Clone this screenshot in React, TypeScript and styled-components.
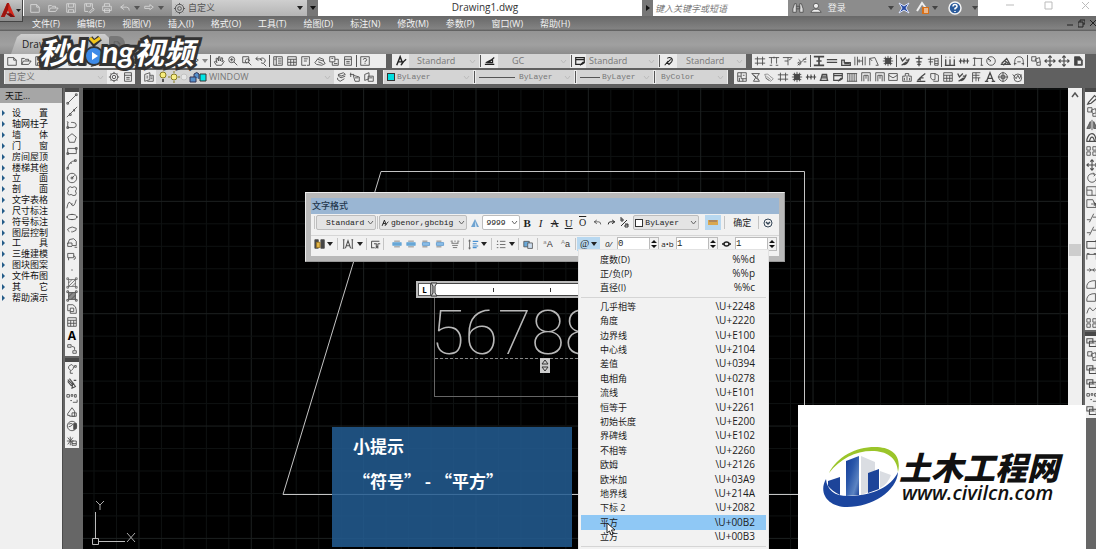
import React from "react";
import styled, { createGlobalStyle, css } from "styled-components";

const SANS = '"Open Sans", "Noto Sans CJK SC", sans-serif';
const MONO = '"Liberation Mono", "Noto Sans CJK SC", monospace';

const GlobalStyle = createGlobalStyle`
  * { box-sizing: border-box; }
  body { margin: 0; overflow: hidden; background: #6a6a6a; font-family: ${SANS}; }
  button, select, input { font: inherit; color: inherit; border: 0; padding: 0; margin: 0; background: none; outline: none; border-radius: 0; }
  button { display: flex; align-items: center; justify-content: center; }
  ul { list-style: none; margin: 0; padding: 0; }
  svg { display: block; flex: none; }
`;

/* ---------- icons, all on a 14 x 14 field ---------- */

const icons: Record<string, React.ReactNode> = {
  new: <path d="M2 3H9L12 6V12H2ZM9 3V6H12" />,
  open: <path d="M2 11V4H5L6 5H10V7M2 11L4 7H13L10 11Z" />,
  save: <path d="M2 2H12V12H2ZM4 2V6H10V2M4 12V9H10V12" />,
  saveAs: <path d="M2 2H11V7M2 2V11H6M4 2V5H9V2M7 12L12 7L13 9L8 13Z" />,
  print: <path d="M4 5V2H10V5M2 5H12V10H2ZM4 8H10V12H4Z" />,
  undo: <path d="M6 3L2 6L6 9M2 6H9Q12 6 12 10" />,
  redo: <path d="M8 3L12 6L8 9V7.500H2V5H8Z" />,
  gear: (
    <>
      <circle cx="7" cy="7" r="4.500" />
      <circle cx="7" cy="7" r="2" />
      <path d="M7 1V3M7 11V13M1 7H3M11 7H13M3 3L4 4M10 10L11 11M11 3L10 4M3 11L4 10" />
    </>
  ),
  hand: <path d="M4 12L1.500 8L3 7L4.500 9L3.500 4L5 3.500L6.500 7V2L8 2L8.500 7L10 3L11.300 3.500L10.500 8L12 6.500L13 7.500L10 12Z" />,
  zoom: (
    <>
      <circle cx="5.500" cy="5.500" r="3.500" />
      <path d="M8 8L12 12M5.500 3.500V7.500M3.500 5.500H7.500" />
    </>
  ),
  zoomWin: <path d="M2 2H9V9H2ZM8 8L12 12M7 9.500A2.500 2.500 0 1 1 10 7" />,
  zoomPrev: <path d="M3 2L1 4.500L4 6.500M1 4.500H7L8 7M6 6A3 3 0 1 1 7 9M10 10L13 13" />,
  props: <path d="M2 2H12V12H2ZM5 2V12M7 4.500H11M7 7H11M7 9.500H11M3.500 4V6" />,
  grid: <path d="M2 2H12V12H2ZM2 5H12M5.500 5V12M9 5V12M2 8.500H12" />,
  palette: <path d="M2 2H11V8M2 2V12H7M4.500 4.500H9M4.500 7H8M11 8V12H8" />,
  sheet: <path d="M1 9L4 5L11 7L13 10L9 12L3 11ZM4 5L6 3L11 5V7M5 8L10 10" />,
  markup: <path d="M2 2H8V8H2ZM8 5H12V12H5V8M7 10H11M4 4H6" />,
  calc: <path d="M3 2H11V12H3ZM3 5H11M5 7.500H9M5 9.500H9" />,
  help: (
    <>
      <path d="M2 2H12V12H2Z" />
      <path d="M5 5.500Q5 4 7 4Q9 4 9 5.500Q9 7 7 7.500V8.500M7 9.500V10.500" />
    </>
  ),
  styleA: <path d="M2 12L6 2L9 10M3.500 8H8M7 12Q9 8 13 5" strokeWidth="1.700" />,
  dim: <path d="M1 11H12M2 9L8 6L12 3M5 9L10 5V9Z" strokeWidth="1.400" />,
  table: <path d="M2 3H12V9L9 11H2ZM2 5.500H12M7 12L11 8" strokeWidth="1.400" />,
  leader: <path d="M2 12L6 7M5 4A3 3 0 1 1 10 8L7 11L5 9L9 5" strokeWidth="1.200" />,
  layers: <path d="M2 4L8 2V10L2 12ZM4 6H6M4 8H6M8 5H12V12H5M9 7H11M9 9H11" />,
  layerStack: <path d="M4 4L10 2L12 4L7 6ZM4 4V6L7 8L12 6M3 8V10L6 12L11 9" />,
  layerPrev: <path d="M2 2V7M1 4H6M5 5L12 7V12H7ZM7 8H11" />,
  layerState: <path d="M2 4L7 2V9L2 11ZM6 6H12V12H6ZM8 8H11" />,
  hash: <path d="M4 2V12M10 2V12M1 4.500H13M1 9.500H13" />,
  axis: <path d="M1 3H13M4 3V10M10 3V10M2 12H5M9 12H12M7 2V4" />,
  tee: <path d="M1 3H12M7 3V12M3 7H7M8 6L11 4" />,
  scissor: <path d="M2 12L12 3M3 5L6 8M8 5H12M9 8H12M2 9Q4 7 6 10Q4 13 2 10" />,
  ibeam: <path d="M1 2H13M1 12H13M7 2V12M4 7H10" strokeWidth="2" />,
  wall: <path d="M1 5.500H13M1 8.500H13" strokeWidth="1.500" />,
  stair: <path d="M2 12V6H5V9H12V12ZM5 10H11" strokeWidth="1.500" />,
  window: <path d="M1 2V12M13 2V12M4 2V12M10 2V12M4 7H10M6 5V9" />,
  door: <path d="M2 12V4M2 4L8 3L12 12H9M2 4L5 7" />,
  column: (
    <>
      <path d="M4 4H10V10H4Z" fill="currentColor" />
      <path d="M7 1V13M1 7H13M2 4H12M2 10H12M4 2V12M10 2V12" />
    </>
  ),
  textTool: <path d="M2 3L4 7L8 3M5 11Q9 12 12 4M3 12L9 8M8 6H12" strokeWidth="1.500" />,
  plusText: <path d="M7 1V13M3 4H11M4 8H10M5 11H9" strokeWidth="1.500" />,
  plusGrid: <path d="M4 2V12M1 5H8M2 8H7M9 4H13V12H9ZM9 7H13M9 10H13" />,
  dims: <path d="M1 12H13M2 5V12M7 5V12M12 5V12M2 2V3M7 2V3M12 2V3" strokeWidth="1.500" />,
  dimRow: <path d="M1 7H13M3 4V10M7 4V10M11 4V10M2 8L4 6M6 8L8 6" strokeWidth="1.300" />,
  dimEnds: <path d="M2 4H12M3 4V12M11 4V12M1 4L4 3M10 12H13M1 12H4" />,
  circle: (
    <>
      <circle cx="7" cy="7" r="5" />
      <path d="M7 7L4 4M7 7H5M4 4V6" />
    </>
  ),
  angle: <path d="M2 11H13L9 4L3 10M7 7L11 10M5 12L8 9" strokeWidth="1.500" />,
  arc: <path d="M2 12V8Q2 2 7 2Q12 2 12 8V12M1 10H4M10 10H13M5 8H9" />,
  copy: <path d="M2 2H7V7H2ZM6 5L11 3L12 8L8 9ZM8 9V12H12V8" />,
  move: <path d="M7 1V13M1 7H13M5 3L7 1L9 3M5 11L7 13L9 11M3 5L1 7L3 9M11 5L13 7L11 9" strokeWidth="1.300" />,
  paste: (
    <>
      <path d="M3 2H9L12 6V12H3Z" fill="#444" />
      <path d="M6 6H11V11H6Z" fill="#eee" />
    </>
  ),
  room: <path d="M2 2H12V12H2ZM2 6H6M6 2V9H12M8 12V9M4 8V12M8 5H10" />,
  leaf: <path d="M2 3H11L8 7L11 12H4L7 7ZM4 5L9 10" />,
  ball: <path d="M2 4Q6 2 8 6L12 9L9 12L4 9ZM4 6L9 10M3 8L7 11" opacity=".6" />,
  bench: <path d="M2 11H12M3 11L5 4H10L11 11M4 8H10M5 6H10" strokeWidth="1.500" />,
  bars: <path d="M2 3V12M4.500 3V12M7 3V12M9.500 3V12M12 3V12M1 3H13M1 12H13" />,
  gate: <path d="M2 12V2H12V12M4.500 12V5H9.500V12M7 5V9" />,
  frame: <path d="M2 3H12V11H2ZM2 5L7 8L12 5" />,
  tower: <path d="M2 12V6H5V3H9V6H12V12ZM4 8V11M7 5V11M10 8V11" />,
  steps: <path d="M2 12H12M3 11L8 6L12 3M6 11V8H10" strokeWidth="1.500" />,
  pages: <path d="M2 3H7V10Q4 12 2 8ZM7 3L11 5V12H5" />,
  flag: <path d="M3 13V2H12M3 5H11M3 8H12M7 2V12M10 8V12" />,
  bigA: <path d="M3 12L7 2L11 12M4.500 8.500H9.500M1 12H5M9 12H13" strokeWidth="1.500" />,
  target: (
    <>
      <circle cx="7" cy="7" r="5" />
      <path d="M7 1V13M1 7H13M5 5H9V9H5Z" />
    </>
  ),
  ring: (
    <>
      <circle cx="8" cy="8" r="4.500" />
      <path d="M2 4L6 9L8 5L10 9L12 4" />
    </>
  ),
  line: <path d="M2 12L12 2M1 11H3V13H1ZM11 1H13V3H11Z" />,
  xline: <path d="M1 13L13 1M4 9H6V11H4ZM9 4H10V6H9Z" />,
  pline: <path d="M2 4V10M2 10H9Q12 10 12 7Q12 4 8 4H6M1 9H3V11H1ZM1 3L3 4" />,
  polygon: <path d="M7 2L12 6L10 12H4L2 6Z" />,
  rect: <path d="M2 4H12V10H2ZM1 9H3V11H1ZM11 3H13V5H11Z" />,
  arcDraw: <path d="M2 12Q3 4 11 3M1 11H3V13H1ZM5 6H7M10 2H12V4H10Z" />,
  circleDraw: (
    <>
      <circle cx="7" cy="7" r="5.500" />
      <path d="M7 7L10 4M6 6H8V8H6Z" />
    </>
  ),
  cloud: <path d="M3 3Q5 1 7 3Q10 1 12 3Q13 5 11 7Q13 10 11 12Q8 13 6 11Q2 13 2 9Q4 7 2 5Z" />,
  spline: <path d="M1 12Q3 1 6 7Q9 13 12 2M6 7H8" />,
  ellipse: (
    <>
      <ellipse cx="7" cy="7" rx="5.500" ry="3" />
      <path d="M6 4H8M6 10H8M1 6V8M13 6V8" />
    </>
  ),
  ellArc: <path d="M4 9Q0 7 3 5Q7 2 12 5Q13 8 8 9M7 8V10" />,
  block: <path d="M2 8L4 3L9 2L12 5V10H7V7H2V11H7M10 12H13" />,
  insert: <path d="M2 4H9V9H2ZM9 7A2 2 0 1 1 9 11M3 9V12" />,
  point: <path d="M6.500 7H7.500" strokeWidth="1.500" />,
  hatch: <path d="M3 3H11V11H3ZM3 7L7 3M3 11L11 3M7 11L11 7M1 1H3V3H1ZM11 1H13V3H11ZM1 11H3V13H1ZM11 11H13V13H11Z" strokeWidth=".8" />,
  gradient: (
    <>
      <path d="M3 3H11V11H3Z" fill="#8a8a8a" />
      <path d="M1 1H3V3H1ZM11 1H13V3H11ZM1 11H3V13H1ZM11 11H13V13H11ZM3 8L8 3M6 11L11 6" />
    </>
  ),
  region: <path d="M2 2H8Q12 4 12 8V12H5V9H2ZM5 9V6H9V10H5" />,
  nodes: <path d="M2 2H6V5H2ZM7 4L10 5V8M8 9H12V12H8Z" />,
  bulb: <path d="M4 3Q7 0 9 4Q9 7 6 9Q1 6 4 3M5 9V12H8M10 3H12V5H10Z" />,
  brush: <path d="M2 3L8 9M4 2L9 8L6 10L2 5M9 4H12M8 7L11 11L7 13Z" strokeWidth="1.300" />,
  dots: <path d="M1 3H4V6H1ZM6 3H8V5H6ZM10 3H12V6H10ZM5 10H7M8 12H13V9" />,
  home: <path d="M2 9L7 2L10 6V12H4M2 9V11H5M7 8H12V12H7Z" />,
  globe: (
    <>
      <circle cx="7" cy="7" r="5.500" />
      <path d="M3 5Q6 3 8 5L6 7L3 8" />
      <path d="M9 4H12V10L9 11Z" fill="currentColor" />
    </>
  ),
  sun: <path d="M5 2V12M1 7H9M2 3L8 10M8 3L2 11M7 7H12V12H7ZM7 10H12" />,
  pencil: <path d="M3 11L10 3L13 6L6 12L2 13Z" strokeWidth="1.400" />,
  mirror: <path d="M7 1V13M5 3V11H1ZM9 3V11H13Z" fill="#777" />,
  offset: <path d="M1 11V9Q3 2 7 2Q11 2 12 11ZM4 11Q5 6 7 6Q9 6 10 11" strokeWidth="1.400" />,
  array: <path d="M1 2H5V6H1ZM8 2H12V6H8ZM1 8H5V12H1ZM8 8H12V12H8Z" />,
  rotate: <path d="M10 3A5 5 0 1 0 12 7M8 1L11 3L9 5" />,
  scale: <path d="M1 2H12V12H1ZM1 6H7V12" />,
  stretch: <path d="M1 2H8L12 11H1ZM6 7H12M9 5L12 7L9 9" />,
  trim: <path d="M1 9H5M8 6H12M4 12L9 2" />,
  breakIt: <path d="M1 10V4H12V10M1 3H4M9 3H12" />,
  boxOpen: <path d="M1 12V4H12V12H1M11 3H13" strokeWidth="1.200" />,
  join: <path d="M1 7H13M4 5L6 7L4 9M10 5L8 7L10 9" />,
  fillet: <path d="M1 12V9Q2 3 11 3V12Z" />,
  wave: <path d="M1 11Q4 1 6 6Q8 10 12 4" />,
  front: <path d="M1 2H8V7H1ZM4 5H12V11H4ZM4 7H10" strokeWidth="1.200" />,
  align: (
    <>
      <path d="M3 3H11M3 11H11" stroke="#666" />
      <path d="M1 5H13V9H1Z" fill="#68a8d8" stroke="#68a8d8" />
    </>
  ),
  alignBlue: (
    <>
      <path d="M2 3H9M2 11H9" stroke="#555" />
      <path d="M2 5H12V9H2Z" fill="#8cbfe8" stroke="#5090c8" />
    </>
  ),
  distribute: <path d="M1 3H4M6 3H8M10 3H13M2 6H12M3 9H11M4 12H10M2 4L4 6M12 4L10 6" />,
  columns: (
    <>
      <path d="M1 2H5V12H1ZM8 2H12V12H8Z" fill="#444" />
      <path d="M3 5H7V11H3Z" fill="#e5b84a" stroke="#a07820" />
    </>
  ),
  boxA: <path d="M2 2V12M12 2V12M4 12L7 3L10 12M5 9H9M1 2H3M11 2H13M1 12H3M11 12H13" strokeWidth="1.200" />,
  para: <path d="M2 3H12M2 3V11H6M5 6H8V11M10 6V12M10 6H13M10 9L7 12" strokeWidth="1.300" />,
  spacing: (
    <>
      <path d="M2 2V12M1 3L2 1L3 3M1 11L2 13L3 11" />
      <path d="M6 3H13M6 6H11M6 9H13M6 11H11" stroke="#4a90d0" strokeWidth="1.400" />
    </>
  ),
  list: <path d="M5 3H12M5 7H12M5 11H12M2 2V4M1 7H3M1 11H3" />,
  field: (
    <>
      <path d="M1 3H8V10H1Z" fill="#68a8d8" />
      <path d="M6 5H12V12H6Z" fill="#cde" />
    </>
  ),
  binoc: (
    <>
      <path d="M3 2H5V12H1V8ZM9 2H11L13 8V12H9Z" fill="#ddd" />
      <path d="M5 5H9V8H5" />
    </>
  ),
  user: (
    <>
      <circle cx="7" cy="4.500" r="3" fill="#eee" />
      <path d="M1 12Q2 9 5 8.500H9Q12 9 13 12Z" fill="#eee" />
    </>
  ),
};

type IconProps = { name: string; size?: number; color?: string };
const Icon = ({ name, size = 12, color = "#505050" }: IconProps) => (
  <svg width={size} height={size} viewBox="0 0 14 14" fill="none" stroke={color} color={color} strokeWidth="1">
    {icons[name]}
  </svg>
);

const Caret = ({ color = "#222" }: { color?: string }) => (
  <svg width="6" height="4" viewBox="0 0 6 4"><path d="M0 0H6L3 4Z" fill={color} /></svg>
);
const Chevron = ({ color = "#999" }: { color?: string }) => (
  <svg width="7" height="5" viewBox="0 0 7 5" fill="none" stroke={color}><path d="M1 1L3.500 4L6 1" /></svg>
);

/* ---------- shared parts ---------- */

const IconButton = styled.button<{ $w?: number; $active?: boolean }>`
  width: ${(p) => p.$w ?? 14}px;
  height: 100%;
  flex: 0 1 auto;
  min-width: 0;
  gap: 2px;
  font-size: 12px;
  line-height: 14px;
  background: ${(p) => (p.$active ? "#b8d8f0" : "none")};
`;

const Spacer = styled.span<{ $w: number }>`
  flex: none;
  width: ${(p) => p.$w}px;
`;

const Separator = styled.span<{ $light?: boolean }>`
  flex: none;
  width: 1px;
  margin: 1px;
  align-self: stretch;
  background: ${(p) => (p.$light ? "#c4c4c4" : "#555")};
`;

const Field = styled.label<{ $w: number; $boxed?: boolean; $bg?: string }>`
  display: flex;
  align-items: center;
  gap: 2px;
  flex: none;
  width: ${(p) => p.$w}px;
  height: 100%;
  padding: 0 3px;
  background: ${(p) => p.$bg ?? "#d4d4d4"};
  ${(p) => p.$boxed && css`border: 1px solid #bdbdbd; border-radius: 2px; padding: 0 1px; gap: 1px;`}
`;

const Select = styled.select<{ $mono?: boolean; $size?: number; $color?: string; $indent?: number }>`
  appearance: none;
  flex: 1;
  min-width: 0;
  font-family: ${(p) => (p.$mono ? MONO : SANS)};
  font-size: ${(p) => p.$size ?? 9}px;
  line-height: 12px;
  color: ${(p) => p.$color ?? "#777"};
  padding-left: ${(p) => p.$indent ?? 0}px;
`;

const Swatch = styled.span<{ $fill: string }>`
  flex: none;
  width: 8px;
  height: 8px;
  border: 1px solid #333;
  background: ${(p) => p.$fill};
`;

const LineSample = styled.span<{ $w: number }>`
  flex: none;
  width: ${(p) => p.$w}px;
  height: 1px;
  background: #555;
`;

const IconGroup = ({ names }: { names: string[] }) => (
  <>
    {names.map((n, i) =>
      n === "|" ? <Separator key={i} /> : (
        <IconButton key={i} aria-label={n}><Icon name={n} color="#484848" /></IconButton>
      )
    )}
  </>
);

/* ---------- header ---------- */

const Page = styled.div`
  position: relative;
  display: flex;
  flex-direction: column;
  min-height: 100vh;
  overflow: hidden;
  background: #6a6a6a;
`;

const TitleBar = styled.header`
  display: flex;
  height: 16px;
  padding-left: 24px;
  background: #fff;
`;

const QuickBar = styled.div`
  display: flex;
  align-items: center;
  width: 148px;
  padding-left: 2px;
  background: linear-gradient(#a8a8a8, #8a8a8a);
`;

const Workspace = styled.label`
  display: flex;
  align-items: center;
  gap: 2px;
  width: 135px;
  padding: 0 4px 0 1px;
  background: linear-gradient(#cfcfcf, #b4b4b4);
`;

const SquareButton = styled.button`
  width: 11px;
  background: #777;
`;

const WindowTitle = styled.h1`
  flex: 1;
  margin: 0;
  padding-left: 10px;
  text-align: center;
  font-size: 10px;
  line-height: 14px;
  font-weight: 400;
  color: #333;
`;

const SearchInput = styled.input`
  width: 135px;
  padding-left: 2px;
  font-size: 9px;
  font-style: italic;
  background: #fff;
  &::placeholder { color: #777; opacity: 1; }
`;

const Account = styled.div`
  display: flex;
  align-items: center;
  width: 190px;
  padding-left: 1px;
  background: #8c8c8c;
  color: #eee;
  font-size: 9px;
`;

const SignIn = styled.button`
  width: 64px;
  padding: 0 0 2px 3px;
  justify-content: flex-start;
`;

const WindowButtons = styled.div`
  display: flex;
  justify-content: space-between;
  width: 118px;
  padding: 0 6px 6px 28px;
`;

const AppButton = styled.button`
  position: absolute;
  z-index: 2;
  left: 0;
  top: 0;
  width: 23px;
  height: 22px;
  gap: 1px;
  border-right: 1px solid #444;
  border-bottom: 1px solid #444;
  background: linear-gradient(#c4c4c4, #8c8c8c);
`;

const MenuBar = styled.nav`
  display: flex;
  align-items: center;
  gap: 17px;
  height: 15px;
  padding-left: 32px;
  background: linear-gradient(#686868, #828282 85%, #5a5a5a);
  button { color: #f2f2f2; font-size: 9px; line-height: 13px; }
`;

const DocButtons = styled.div`
  display: flex;
  gap: 4px;
  margin-left: auto;
`;

const TabStrip = styled.div`
  display: flex;
  align-items: flex-end;
  height: 23px;
  padding-left: 11px;
  background: linear-gradient(#949494, #a0a0a0 60%, #8c8c8c);
`;

const FileTab = styled.button`
  width: 98px;
  height: 20px;
  justify-content: flex-start;
  padding-left: 11px;
  font-size: 10px;
  color: #222;
  background: linear-gradient(#cecece, #ababab);
  clip-path: polygon(0 100%, 6px 15%, 10px 0, 94px 0, 100% 20%, 100% 100%);
`;

const NewTab = styled.button`
  width: 16px;
  height: 16px;
  margin-bottom: 2px;
  border-radius: 2px 8px 8px 2px;
  background: #777;
`;

const Watermark = styled.div`
  position: absolute;
  z-index: 3;
  left: 39px;
  top: 33px;
  display: flex;
  align-items: center;
  font: italic 700 30px/36px "Noto Sans CJK SC", sans-serif;
  color: #fff;
  -webkit-text-stroke: 6px #333;
  paint-order: stroke fill;
`;

const Latin = styled.span`
  font: italic 700 31px/36px Lato, sans-serif;
`;

const ToolRows = styled.div`
  display: flex;
  flex-direction: column;
  gap: 2px;
  padding: 0 0 4px 4px;
  background: #606060;
`;

const ToolRow = styled.div`
  display: flex;
  gap: 6px;
  height: 14px;
`;

const Bar = styled.div<{ $w?: number }>`
  display: flex;
  align-items: center;
  flex: none;
  width: ${(p) => (p.$w ? `${p.$w}px` : "auto")};
  padding-left: 1px;
  background: #ececec;
`;

/* ---------- body ---------- */

const Body = styled.main`
  display: flex;
  flex: 1;
`;

const Palette = styled.aside`
  width: 62px;
  background: #f0f0f0;
`;

const PaletteTitle = styled.h2`
  height: 15px;
  margin: 0 0 5px;
  padding-left: 5px;
  font-size: 9px;
  line-height: 16px;
  font-weight: 400;
  color: #111;
  background: #a6a6a6;
`;

const PaletteList = styled.ul`
  display: grid;
  grid-auto-rows: 1fr;
  height: 195px;
`;

const PaletteItem = styled.button`
  width: 100%;
  height: 100%;
  gap: 7px;
  justify-content: flex-start;
  padding-left: 2px;
  font-size: 9px;
  line-height: 10px;
  color: #111;
  span { width: 36px; text-align-last: justify; white-space: nowrap; }
`;

const SideTools = styled.div<{ $w: number; $pad: number }>`
  width: ${(p) => p.$w}px;
  flex: none;
  padding-left: ${(p) => p.$pad}px;
  overflow: hidden;
  background: #666;
  border-left: 1px solid #4c4c4c;
`;

const SideStack = styled.div<{ $h: number; $gap?: number }>`
  display: grid;
  grid-auto-rows: 1fr;
  width: 14px;
  height: ${(p) => p.$h}px;
  margin-top: ${(p) => p.$gap ?? 4}px;
  background: #f0f0f0;
  box-shadow: 0 -4px 0 #484848;
`;

const Canvas = styled.section`
  position: relative;
  flex: 1;
  overflow: hidden;
  background: #000;
`;

const Drawing = styled.svg`
  position: absolute;
  left: 0;
  top: 0;
`;

const ScrollTrack = styled.div`
  display: flex;
  flex-direction: column;
  align-items: center;
  gap: 146px;
  width: 14px;
  padding-top: 4px;
  background: #f0f0f0;
`;

const ScrollThumb = styled.div`
  width: 12px;
  height: 12px;
  background: #cdcdcd;
`;

/* ---------- text editor on the canvas ---------- */

const Ruler = styled.div`
  position: absolute;
  left: 333px;
  top: 193px;
  width: 200px;
  height: 17px;
  padding: 2px;
  display: flex;
  gap: 2px;
  background: #bbb;
`;

const RulerTab = styled.button`
  width: 13px;
  border: 1px solid #555;
  background: #fff;
  font-size: 8px;
  line-height: 8px;
  font-weight: 700;
`;

const RulerScale = styled.div`
  flex: 1;
  display: flex;
  align-items: center;
  gap: 56px;
  border: 1px solid #444;
  background: #fff;
  i { width: 1px; height: 4px; background: #333; }
`;

const TextFrame = styled.div`
  position: absolute;
  left: 351px;
  top: 210px;
  width: 300px;
  height: 99px;
  border: 1px solid #666;
  border-top: 0;
`;

const EditText = styled.div`
  height: 61px;
  border-bottom: 1px dashed #888;
  font: 100 61px/71px Roboto, sans-serif;
  text-indent: -4px;
  color: #b8b8b8;
`;

const FrameHandle = styled.button`
  position: absolute;
  left: 457px;
  top: 270px;
  width: 10px;
  height: 15px;
  background: #ccc;
`;

const Dialog = styled.section`
  position: absolute;
  left: 222px;
  top: 104px;
  width: 480px;
  padding: 5px;
  border: 1px solid #ececec;
  border-color: #ececec #999 #999 #ececec;
  background: #b9b9b9;
`;

const DialogTitle = styled.h2`
  margin: 0;
  height: 16px;
  padding-left: 1px;
  font-size: 9px;
  line-height: 15px;
  font-weight: 500;
  color: #24384e;
  background: #9ab6d3;
`;

const DialogRows = styled.div`
  background: #f1f1f1;
  color: #222;
`;

const DialogRow = styled.div`
  display: flex;
  align-items: center;
  height: 21px;
  padding: 1px 2px 5px;
  & + & { border-top: 1px solid #d6d6d6; }
`;

const Letter = styled.span<{ $kind?: string; $size?: number }>`
  font-family: "Liberation Serif", serif;
  font-size: ${(p) => p.$size ?? 11}px;
  line-height: 12px;
  ${(p) => p.$kind === "b" && "font-weight: 700;"}
  ${(p) => p.$kind === "i" && "font-style: italic;"}
  ${(p) => p.$kind === "u" && "text-decoration: underline;"}
  ${(p) => p.$kind === "s" && "text-decoration: line-through;"}
  ${(p) => p.$kind === "o" && "text-decoration: overline;"}
`;

const CaseLetters = styled.span`
  display: flex;
  align-items: flex-end;
  font-family: "Liberation Sans", sans-serif;
  font-size: 9px;
  line-height: 11px;
  color: #333;
  sup { font-size: 6px; line-height: 6px; align-self: flex-start; color: #888; }
`;

const OkButton = styled.button`
  width: 30px;
  font-size: 9px;
  line-height: 12px;
`;

const SpinLabel = styled.label`
  display: flex;
  align-items: center;
  height: 14px;
  span { display: flex; justify-content: center; width: 17px; font-size: 8px; line-height: 12px; }
  input { width: 32px; height: 14px; border: 1px solid #bbb; border-right: 0; background: #fff; font: 9px/12px ${MONO}; }
`;

const Spinner = styled.button`
  width: 10px;
  height: 14px;
  border: 1px solid #bbb;
`;

const SymbolMenu = styled.div`
  position: absolute;
  left: 495px;
  top: 161px;
  width: 191px;
  padding: 2px;
  background: #f2f2f2;
  border: 1px solid #e2e2e2;
`;

const SymbolGroup = styled.ul<{ $h: number }>`
  display: grid;
  grid-auto-rows: 1fr;
  height: ${(p) => p.$h}px;
  & + & { margin-top: 2px; border-top: 1px solid #d5d5d5; padding-top: 1px; }
`;

const SymbolItem = styled.button<{ $active?: boolean }>`
  width: 100%;
  height: 100%;
  justify-content: space-between;
  padding: 0 11px 0 19px;
  font-size: 9px;
  line-height: 13px;
  color: #1c1c1c;
  background: ${(p) => (p.$active ? "#8fc8f5" : "none")};
  kbd { font-family: ${SANS}; font-size: 10px; }
`;

const Pointer = styled.svg`
  position: absolute;
  left: 523px;
  top: 434px;
`;

const TipCard = styled.aside`
  position: absolute;
  left: 249px;
  top: 339px;
  width: 240px;
  height: 120px;
  padding: 7px 21px;
  background: rgba(35, 92, 146, 0.86);
  color: #fff;
  font-family: "Noto Sans CJK SC", sans-serif;
  font-size: 17px;
  line-height: 24px;
  font-weight: 700;
  p { margin: 0 0 11px; white-space: nowrap; }
`;

const SiteCard = styled.a`
  position: absolute;
  z-index: 4;
  right: 10px;
  bottom: 0;
  width: 288px;
  height: 144px;
  display: flex;
  align-items: center;
  padding: 0 0 0 25px;
  background: #fff;
  color: #111;
  text-decoration: none;
`;

const SiteText = styled.div`
  margin-left: -2px;
  strong { display: block; font: italic 900 32px/32px "Noto Sans CJK SC", sans-serif; white-space: nowrap; }
  span { display: block; padding-left: 3px; font: italic 600 20px/22px "Open Sans", sans-serif; }
`;

/* ---------- data ---------- */

const menus = ["文件(F)", "编辑(E)", "视图(V)", "插入(I)", "格式(O)", "工具(T)", "绘图(D)", "标注(N)", "修改(M)", "参数(P)", "窗口(W)", "帮助(H)"];

const palette = ["设 置", "轴网柱子", "墙 体", "门 窗", "房间屋顶", "楼梯其他", "立 面", "剖 面", "文字表格", "尺寸标注", "符号标注", "图层控制", "工 具", "三维建模", "图块图案", "文件布图", "其 它", "帮助演示"];

const basics = [["度数(D)", "%%d"], ["正/负(P)", "%%p"], ["直径(I)", "%%c"]];
const symbols = [
  ["几乎相等", "\\U+2248"], ["角度", "\\U+2220"], ["边界线", "\\U+E100"], ["中心线", "\\U+2104"],
  ["差值", "\\U+0394"], ["电相角", "\\U+0278"], ["流线", "\\U+E101"], ["恒等于", "\\U+2261"],
  ["初始长度", "\\U+E200"], ["界碑线", "\\U+E102"], ["不相等", "\\U+2260"], ["欧姆", "\\U+2126"],
  ["欧米加", "\\U+03A9"], ["地界线", "\\U+214A"], ["下标 2", "\\U+2082"], ["平方", "\\U+00B2"], ["立方", "\\U+00B3"],
];

const standardTools = ["new", "open", "save", "print", "copy", "paste", "pencil", "zoom", "props", "grid", "sheet", "calc", "undo", "redo"];
const viewTools = ["|", "hand", "zoom", "zoomWin", "zoomPrev", "|", "props", "grid", "palette", "sheet", "markup", "calc", "|", "help"];
const archTools = ["hash", "axis", "tee", "scissor", "|", "ibeam", "wall", "stair", "window", "door", "column", "|", "textTool", "plusText", "plusGrid", "|", "dims", "dimRow", "dimEnds", "circle", "angle", "arc", "|", "copy", "move", "move", "paste"];
const archTools2 = ["room", "leaf", "ball", "hash", "column", "dimRow", "bench", "table", "bars", "gate", "gate", "frame", "tower", "steps", "pages", "grid", "textTool", "flag", "bigA", "target", "ring"];
const drawTools = ["line", "xline", "pline", "polygon", "rect", "arcDraw", "circleDraw", "cloud", "spline", "ellipse", "ellArc", "block", "insert", "point", "hatch", "gradient", "region", "grid", "A", "nodes"];
const layerTools = ["bulb", "brush", "dots", "home", "globe", "sun"];
const editTools = ["pencil", "copy", "mirror", "offset", "array", "move", "rotate", "scale", "stretch", "trim", "trim", "boxOpen", "breakIt", "join", "fillet", "fillet", "wave", "array"];
const orderTools = ["front", "copy", "front", "front", "dots", "front"];

const GRID = 22.47;
const gridLines = Array.from({ length: 130 }, (_, i) => i);

const SideGlyph = ({ name }: { name: string }) => (
  <IconButton aria-label={name}>
    {name === "A" ? <b>A</b> : <Icon name={name} size={12} color="#4c4c4c" />}
  </IconButton>
);

const Spin = ({ label, value }: { label: React.ReactNode; value: string }) => (
  <SpinLabel>
    <span>{label}</span>
    <input defaultValue={value} />
    <Spinner aria-label="step">
      <svg width="6" height="10" viewBox="0 0 6 10"><path d="M0 4L3 1L6 4ZM0 6L3 9L6 6Z" fill="#111" /></svg>
    </Spinner>
  </SpinLabel>
);

export default function App() {
  return (
    <Page>
      <GlobalStyle />
      <AppButton aria-label="应用程序">
        <svg width="14" height="17" viewBox="0 0 16 18" preserveAspectRatio="none">
          <path d="M0 16L7 1H9L16 16H11L8 9L4 16Z" fill="#d6281c" />
          <path d="M7 1H9L8 8L4 16H0Z" fill="#9d1510" />
          <path d="M5 12H11L16 16H11Z" fill="#751010" />
        </svg>
        <svg width="5" height="3" viewBox="0 0 5 3"><path d="M0 0H5L2.500 3Z" fill="#222" /></svg>
      </AppButton>

      <TitleBar>
        <QuickBar>
          {["new", "open", "save", "saveAs", "print", "undo"].map((n) => (
            <IconButton key={n} $w={18} aria-label={n}><Icon name={n} color="#d8d8d8" /></IconButton>
          ))}
          <Caret color="#555" />
          <IconButton $w={18} aria-label="redo"><Icon name="redo" color="#d8d8d8" /></IconButton>
          <Caret color="#555" />
        </QuickBar>
        <Workspace>
          <Icon name="gear" size={13} color="#555" />
          <Select aria-label="工作空间" $color="#555"><option>自定义</option></Select>
          <Caret />
        </Workspace>
        <SquareButton aria-label="更多"><Caret color="#111" /></SquareButton>
        <WindowTitle>Drawing1.dwg</WindowTitle>
        <SquareButton aria-label="展开">
          <svg width="4" height="6" viewBox="0 0 4 6"><path d="M0 0L4 3L0 6Z" fill="#111" /></svg>
        </SquareButton>
        <SearchInput aria-label="搜索" placeholder="键入关键字或短语" />
        <Account>
          <IconButton $w={18} aria-label="搜索"><Icon name="binoc" /></IconButton>
          <IconButton $w={18} aria-label="用户"><Icon name="user" /></IconButton>
          <SignIn>登录</SignIn>
          <Caret color="#444" />
          <IconButton $w={20} aria-label="Exchange">
            <svg width="12" height="12" viewBox="0 0 12 12">
              <path d="M1 1L6 4L11 1L8 6L11 11L6 8L1 11L4 6Z" fill="#2548a0" stroke="#dde5ff" />
            </svg>
          </IconButton>
          <IconButton $w={18} aria-label="A360">
            <svg width="14" height="14" viewBox="0 0 14 14">
              <path d="M1 10L6 2L12 10" fill="none" stroke="#eee" strokeWidth="2" />
              <path d="M6 6H13V13H6Z" fill="#d87018" />
              <path d="M9 7V12M11 7V12" stroke="#fff" />
            </svg>
          </IconButton>
          <Caret color="#444" />
          <IconButton $w={34} aria-label="帮助">
            <svg width="14" height="14" viewBox="0 0 14 14">
              <circle cx="7" cy="7" r="6" fill="#2c5c9c" stroke="#f4f4f4" strokeWidth="1.500" />
              <path d="M5 5.500Q5 3.500 7 3.500Q9 3.500 9 5.500Q9 6.500 7 7.500V8.500M7 10V11" fill="none" stroke="#fff" strokeWidth="1.500" />
            </svg>
          </IconButton>
          <Caret color="#444" />
        </Account>
        <WindowButtons>
          {["M0 4H8", "M1 1H8V8H1Z", "M1 1L8 8M8 1L1 8"].map((d) => (
            <button key={d} aria-label="窗口"><svg width="9" height="9" viewBox="0 0 9 9" fill="none" stroke="#bbb"><path d={d} /></svg></button>
          ))}
        </WindowButtons>
      </TitleBar>

      <MenuBar>
        {menus.map((m) => <button key={m}>{m}</button>)}
        <DocButtons>
          {["M0 6H6", "M0 3H5V8H0ZM2 3V1H7V5H5", "M1 1L7 7M7 1L1 7"].map((d) => (
            <button key={d} aria-label="文档窗口"><svg width="7" height="9" viewBox="0 0 7 9" fill="none" stroke="#222"><path d={d} /></svg></button>
          ))}
        </DocButtons>
      </MenuBar>

      <TabStrip>
        <FileTab>Drawing1</FileTab>
        <NewTab aria-label="新建"><Icon name="new" size={8} color="#555" /></NewTab>
      </TabStrip>
      <Watermark>
        <span>秒</span>
        <Latin>d</Latin>
        <svg width="16" height="34" viewBox="0 0 16 34" overflow="visible">
          <path d="M4 4L8 9L14 4" fill="none" stroke="#333" strokeWidth="6" />
          <circle cx="8" cy="22" r="10" fill="#333" />
          <path d="M4 4L8 8L14 4" fill="none" stroke="#f4c71c" strokeWidth="3" />
          <circle cx="8" cy="22" r="8" fill="#3d8ae8" />
          <path d="M6 18L12 22L6 26Z" fill="#fff" />
        </svg>
        <Latin>ng</Latin>
        <span>视频</span>
      </Watermark>

      <ToolRows>
        <ToolRow>
          <Bar $w={382}>
            <IconGroup names={standardTools} />
            <IconButton $w={8} aria-label="重做列表"><Caret color="#888" /></IconButton>
            <IconGroup names={viewTools} />
          </Bar>
          <Bar $w={354}>
            <IconButton $w={16} aria-label="文字样式"><Icon name="styleA" color="#222" /></IconButton>
            <Field $w={70}><Select aria-label="文字样式" $indent={5}><option>Standard</option></Select><Chevron color="#bbb" /></Field>
            <Separator />
            <IconButton $w={16} aria-label="标注样式"><Icon name="dim" color="#222" /></IconButton>
            <Field $w={72}><Select aria-label="标注样式" $indent={11}><option>GC</option></Select><Chevron color="#bbb" /></Field>
            <Separator />
            <IconButton $w={13} aria-label="表格样式"><Icon name="table" color="#222" /></IconButton>
            <Field $w={72}><Select aria-label="表格样式"><option>Standard</option></Select><Chevron color="#bbb" /></Field>
            <Separator />
            <IconButton $w={16} aria-label="引线样式"><Icon name="leader" color="#222" /></IconButton>
            <Field $w={69}><Select aria-label="引线样式" $indent={6}><option>Standard</option></Select><Chevron color="#bbb" /></Field>
          </Bar>
          <Bar $w={333}><IconGroup names={archTools} /></Bar>
        </ToolRow>
        <ToolRow>
          <Bar $w={131}>
            <Field $w={102}><Select aria-label="工作空间列表"><option>自定义</option></Select><Chevron color="#bbb" /></Field>
            <IconGroup names={["gear", "calc"]} />
          </Bar>
          <Bar $w={236}>
            <IconButton aria-label="图层特性"><Icon name="layers" /></IconButton>
            <Field $w={178}>
              <svg width="48" height="12" viewBox="0 0 48 12" fill="none">
                <circle cx="4" cy="4" r="3" fill="#f6ec7c" stroke="#857a20" />
                <path d="M3 8H5V11H3Z" fill="#555" />
                <circle cx="15" cy="6" r="3" fill="#f7ee88" stroke="#857a20" />
                <path d="M15 0V2M15 10V12M9 6H11M19 6H21" stroke="#857a20" />
                <circle cx="25" cy="6" r="3" fill="#e6e6e6" stroke="#c2c2c2" />
                <path d="M31 6H37V11H31ZM35 6V3Q38 0 40 3V8" fill="#5590cc" stroke="#335" />
                <path d="M41 3H47V10H41Z" fill="#00e5e5" stroke="#333" />
              </svg>
              <Select aria-label="图层"><option>WINDOW</option></Select><Chevron color="#bbb" />
            </Field>
            <IconGroup names={["layerStack", "layerPrev", "layerState"]} />
          </Bar>
          <Bar $w={345}>
            <Field $w={89}><Swatch $fill="#00dede" /><Select aria-label="颜色" $mono $size={8}><option>ByLayer</option></Select><Chevron color="#bbb" /></Field>
            <Separator />
            <Field $w={98}><LineSample $w={36} /><Select aria-label="线型" $mono $size={8} $indent={2}><option>ByLayer</option></Select><Chevron color="#bbb" /></Field>
            <Separator />
            <Field $w={76}><LineSample $w={20} /><Select aria-label="线宽" $mono $size={8}><option>ByLayer</option></Select><Chevron color="#bbb" /></Field>
            <Separator />
            <Field $w={71}><Select aria-label="打印样式" $mono $size={8} $indent={2}><option>ByColor</option></Select><Chevron color="#bbb" /></Field>
          </Bar>
          <Bar $w={290}><IconGroup names={archTools2} /></Bar>
        </ToolRow>
      </ToolRows>

      <Body>
        <Palette>
          <PaletteTitle>天正...</PaletteTitle>
          <PaletteList>
            {palette.map((p) => (
              <li key={p}>
                <PaletteItem>
                  <svg width="3" height="6" viewBox="0 0 3 6"><path d="M0 0L3 3L0 6Z" fill="#235b88" /></svg>
                  <span>{p}</span>
                </PaletteItem>
              </li>
            ))}
          </PaletteList>
        </Palette>

        <SideTools $w={21} $pad={2}>
          <SideStack $h={264}>{drawTools.map((n, i) => <SideGlyph key={i} name={n} />)}</SideStack>
          <SideStack $h={86} $gap={6}>{layerTools.map((n, i) => <SideGlyph key={i} name={n} />)}</SideStack>
        </SideTools>

        <Canvas>
          <Drawing width="2000" height="1200" viewBox="83 88 2000 1200" fill="none">
            {gridLines.map((i) => (
              <g key={i}>
                <path d={`M${94 + i * GRID} 88V1288`} stroke={(i + 3) % 5 === 0 ? "#1d2121" : "#0f1212"} />
                <path d={`M83 ${89 + i * GRID}H2083`} stroke={i % 5 === 0 ? "#1d2121" : "#0f1212"} />
              </g>
            ))}
            <path d="M381 171.500H804.500V494.500H283Z" stroke="#c4c4c4" />
            <path d="M95.500 512V538M99 541.500H125M92.500 538.500H98.500V544.500H92.500Z" stroke="#bbb" />
            <path d="M96 501L100 505L104 501M100 505V510M127 533L135 542M135 533L127 542" stroke="#aaa" />
          </Drawing>

          <TextFrame><EditText>56788</EditText></TextFrame>
          <Ruler>
            <RulerTab>L</RulerTab>
            <RulerScale>
              <svg width="3" height="11" viewBox="0 0 3 11" overflow="visible" fill="none" stroke="#333">
                <path d="M-3 -1H3L1 2V9L3 12H-3L-1 9V2Z" fill="#ddd" />
              </svg>
              <i /><i /><i />
            </RulerScale>
          </Ruler>
          <FrameHandle aria-label="调整高度">
            <svg width="8" height="13" viewBox="0 0 8 13" fill="none" stroke="#333"><path d="M1 5L4 1L7 5ZM1 8L4 12L7 8Z" /></svg>
          </FrameHandle>

          <TipCard>
            <p>小提示</p>
            <p>“符号” - “平方”</p>
          </TipCard>

          <Dialog>
            <DialogTitle>文字格式</DialogTitle>
            <DialogRows>
              <DialogRow>
                <Separator $light />
                <Field $w={60} $boxed $bg="#e4e4e4"><Select aria-label="样式" $mono $size={8} $color="#222" $indent={8}><option>Standard</option></Select><Chevron color="#666" /></Field>
                <Separator $light />
                <Field $w={88} $boxed $bg="#e4e4e4"><Icon name="styleA" size={8} color="#222" /><Select aria-label="字体" $mono $size={8} $color="#222" $indent={1}><option>gbenor,gbcbig</option></Select><Chevron color="#666" /></Field>
                <IconButton $w={16} aria-label="注释性">
                  <svg width="8" height="8" viewBox="0 0 8 8"><path d="M4 0L8 8H0Z" fill="#6fa3d0" /><path d="M4 2V8H6Z" fill="#c8def0" /></svg>
                </IconButton>
                <Field $w={38} $boxed $bg="#fff"><Select aria-label="文字高度" $mono $size={8} $color="#222" $indent={2}><option>9999</option></Select><Chevron color="#666" /></Field>
                <IconButton aria-label="粗体"><Letter $kind="b">B</Letter></IconButton>
                <IconButton aria-label="斜体"><Letter $kind="i">I</Letter></IconButton>
                <IconButton $w={15} aria-label="删除线"><Letter $kind="s">A</Letter></IconButton>
                <IconButton aria-label="下划线"><Letter $kind="u">U</Letter></IconButton>
                <IconButton $w={15} aria-label="上划线"><Letter $kind="o" $size={10}>O</Letter></IconButton>
                <IconButton $w={15} aria-label="放弃"><Icon name="undo" size={9} color="#222" /></IconButton>
                <IconButton aria-label="重做">
                  <svg width="9" height="9" viewBox="0 0 14 14" fill="none" stroke="#222" strokeWidth="1.500"><path d="M8 3L12 6L8 9M12 6H5Q2 6 2 10" /></svg>
                </IconButton>
                <IconButton aria-label="堆叠">
                  <svg width="9" height="11" viewBox="0 0 9 11" fill="none" stroke="#333"><path d="M1 0V4H3V2H1M1 9L7 3M5 7H8V10H5V8H8" /></svg>
                </IconButton>
                <Spacer $w={2} />
                <Field $w={66} $boxed $bg="#e4e4e4"><Swatch $fill="#fff" /><Select aria-label="文字颜色" $mono $size={8} $color="#222" $indent={1}><option>ByLayer</option></Select><Chevron color="#666" /></Field>
                <Spacer $w={6} />
                <IconButton $w={16} $active aria-label="标尺">
                  <svg width="10" height="5" viewBox="0 0 10 5"><path d="M0 0H10V5H0Z" fill="#d9a850" /><path d="M2 0V2M4 0V2M6 0V2M8 0V2" stroke="#866" /></svg>
                </IconButton>
                <Spacer $w={2} />
                <Separator $light />
                <Spacer $w={2} />
                <OkButton>确定</OkButton>
                <Separator $light />
                <IconButton $w={18} aria-label="选项">
                  <svg width="10" height="10" viewBox="0 0 10 10" fill="none" stroke="#345"><circle cx="5" cy="5" r="4" /><path d="M3 4L5 6L7 4" strokeWidth="1.500" /></svg>
                </IconButton>
              </DialogRow>
              <DialogRow>
                <IconButton aria-label="栏数"><Icon name="columns" /></IconButton>
                <Caret /><Spacer $w={3} /><Separator $light />
                <IconButton $w={18} aria-label="对正"><Icon name="boxA" /></IconButton>
                <Caret /><Spacer $w={2} /><Separator $light />
                <IconButton aria-label="段落"><Icon name="para" size={11} /></IconButton>
                <Separator $light />
                <Spacer $w={4} />
                <IconButton $w={15} aria-label="左对齐"><Icon name="align" size={10} /></IconButton>
                <IconButton $w={14} aria-label="居中"><Icon name="align" size={10} /></IconButton>
                <IconButton $w={15} aria-label="右对齐"><Icon name="alignBlue" size={10} /></IconButton>
                <IconButton $w={14} aria-label="两端对齐"><Icon name="alignBlue" size={10} /></IconButton>
                <IconButton $w={15} aria-label="分布"><Icon name="distribute" size={10} /></IconButton>
                <Separator $light />
                <IconButton $w={16} aria-label="行距"><Icon name="spacing" size={11} /></IconButton>
                <Caret /><Spacer $w={3} /><Separator $light />
                <IconButton $w={16} aria-label="编号"><Icon name="list" size={11} /></IconButton>
                <Caret /><Spacer $w={2} /><Separator $light />
                <IconButton $w={16} aria-label="字段"><Icon name="field" size={11} /></IconButton>
                <Separator $light />
                <IconButton $w={18} aria-label="大写"><CaseLetters><sup>a</sup>A</CaseLetters></IconButton>
                <IconButton $w={17} aria-label="小写"><CaseLetters><sup>A</sup>a</CaseLetters></IconButton>
                <Separator $light />
                <IconButton $w={23} $active aria-label="符号"><Letter $size={10}>@</Letter><Caret /></IconButton>
                <Spin label={<i>0/</i>} value="0" />
                <Spin label="a•b" value="1" />
                <Spin
                  label={
                    <svg width="9" height="6" viewBox="0 0 9 6" fill="none" stroke="#222" strokeWidth="1.500" role="img" aria-label="宽度因子">
                      <ellipse cx="4.500" cy="3" rx="2.500" ry="2" />
                      <path d="M0 3H2M7 3H9" />
                    </svg>
                  }
                  value="1"
                />
              </DialogRow>
            </DialogRows>
          </Dialog>

          <SymbolMenu>
            <SymbolGroup $h={43}>
              {basics.map(([a, b]) => <li key={a}><SymbolItem>{a}<kbd>{b}</kbd></SymbolItem></li>)}
            </SymbolGroup>
            <SymbolGroup $h={247}>
              {symbols.map(([a, b]) => <li key={a}><SymbolItem $active={a === "平方"}>{a}<kbd>{b}</kbd></SymbolItem></li>)}
            </SymbolGroup>
            <SymbolGroup $h={20} />
          </SymbolMenu>
          <Pointer width="10" height="14" viewBox="0 0 10 14">
            <path d="M1 1V11L3.500 9L5 13L7 12L5.500 8H9Z" fill="#fff" stroke="#222" />
          </Pointer>
        </Canvas>

        <ScrollTrack>
          <svg width="8" height="6" viewBox="0 0 8 6" fill="none" stroke="#555" strokeWidth="1.500"><path d="M1 5L4 1L7 5" /></svg>
          <ScrollThumb />
        </ScrollTrack>
        <SideTools $w={14} $pad={2}>
          <SideStack $h={238}>{editTools.map((n, i) => <SideGlyph key={i} name={n} />)}</SideStack>
          <SideStack $h={82} $gap={6}>{orderTools.map((n, i) => <SideGlyph key={i} name={n} />)}</SideStack>
        </SideTools>
      </Body>

      <SiteCard href="#">
        <svg width="78" height="62" viewBox="0 0 78 62">
          <defs>
            <linearGradient id="tower" x1="0" y1="0" x2="1" y2="1">
              <stop offset="0" stopColor="#123c98" />
              <stop offset=".4" stopColor="#2a57a9" />
              <stop offset=".75" stopColor="#5c84c2" />
              <stop offset="1" stopColor="#1d4499" />
            </linearGradient>
          </defs>
          <path d="M6 27C14 11 32 1 52 1C68 1 79 9 75 26C74 11 63 5 49 5C32 5 17 13 6 27Z" fill="#9bc52a" />
          <path d="M38 10L52 16V26L46 28V46L38 49Z" fill="#dadde2" />
          <path d="M57 25L68 29Q65 38 57 42Z" fill="#dadde2" />
          <path d="M23 15L36 10V49L23 50Z" fill="url(#tower)" />
          <path d="M45 27L56 23V43L45 47Z" fill="#1d4499" />
          <path d="M5 35L17 31V49Q9 45 5 40Z" fill="#1d4499" />
          <path d="M3 33C4 45 13 51 28 50C50 49 68 41 75 26C74 45 49 61 24 61C5 61-5 47 3 33Z" fill="#1b459e" />
        </svg>
        <SiteText>
          <strong>土木工程网</strong>
          <span>www.civilcn.com</span>
        </SiteText>
      </SiteCard>
    </Page>
  );
}
